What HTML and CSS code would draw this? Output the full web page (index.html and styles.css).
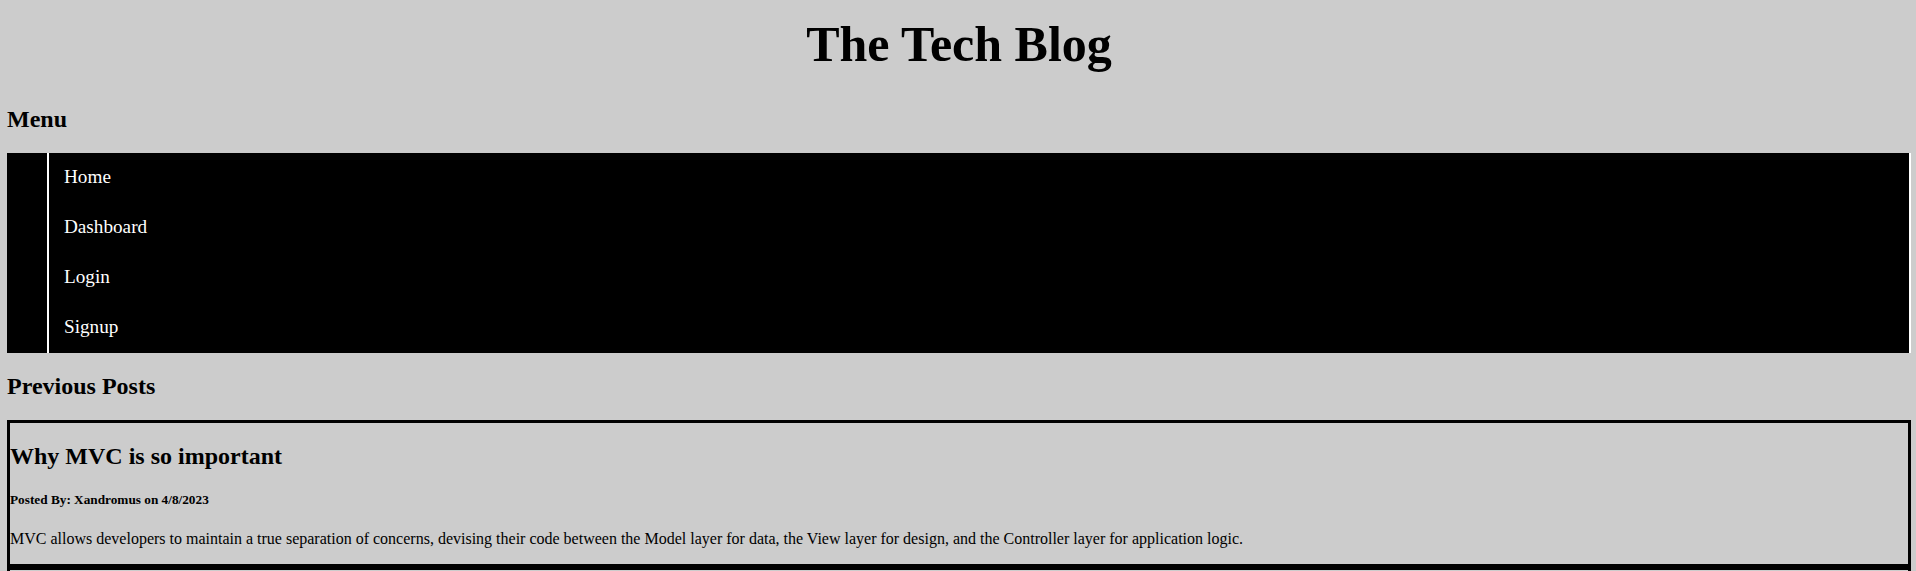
FILE: index.html
```html
<!DOCTYPE html>
<html lang="en">
<head>
<meta charset="utf-8">
<title>The Tech Blog</title>
<link rel="stylesheet" href="styles.css">
</head>
<body>
<header class="site-header">
  <h1 class="site-title">The Tech Blog</h1>
</header>
<h2 class="section-title">Menu</h2>
<nav class="menu">
  <ul class="menu-list">
    <li class="menu-item">Home</li>
    <li class="menu-item">Dashboard</li>
    <li class="menu-item">Login</li>
    <li class="menu-item">Signup</li>
  </ul>
</nav>
<h2 class="section-title">Previous Posts</h2>
<main class="posts">
  <article class="post">
    <h2 class="post-title">Why MVC is so important</h2>
    <h5 class="post-meta">Posted By: Xandromus on 4/8/2023</h5>
    <p class="post-body">MVC allows developers to maintain a true separation of concerns, devising their code between the Model layer for data, the View layer for design, and the Controller layer for application logic.</p>
  </article>
  <article class="post">
    <h2 class="post-title">Authentication vs. Authorization</h2>
    <h5 class="post-meta">Posted By: Xandromus on 4/8/2023</h5>
    <p class="post-body">There is a difference between authentication and authorization.</p>
  </article>
</main>
</body>
</html>
```
FILE: styles.css
```css
html {
  background: #cccccc;
}
body {
  margin: 0;
  padding: 0 5px 0 7px;
  background: #cccccc;
  color: #000000;
  font-family: "Liberation Serif", "Times New Roman", serif;
}
.site-title {
  font-size: 50px;
  font-weight: bold;
  text-align: center;
  margin: 15px 0 33px;
}
.section-title {
  font-size: 24px;
  font-weight: bold;
  margin: 20px 0;
}
.menu {
  background: #000000;
}
.menu-list {
  list-style: none;
  margin: 0 0 0 40px;
  padding: 0;
  border-left: 2px solid #ffffff;
  border-right: 2px solid #ffffff;
}
.menu-item {
  color: #ffffff;
  font-size: 19.2px;
  line-height: 22px;
  padding: 13px 0 15px 15px;
}
.post {
  border: 3px solid #000000;
}
.post-title {
  font-size: 24px;
  font-weight: bold;
  margin: 20px 0;
}
.post-meta {
  font-size: 13.28px;
  font-weight: bold;
  margin: 22px 0;
}
.post-body {
  font-size: 16px;
  margin: 16px 0;
}
```
